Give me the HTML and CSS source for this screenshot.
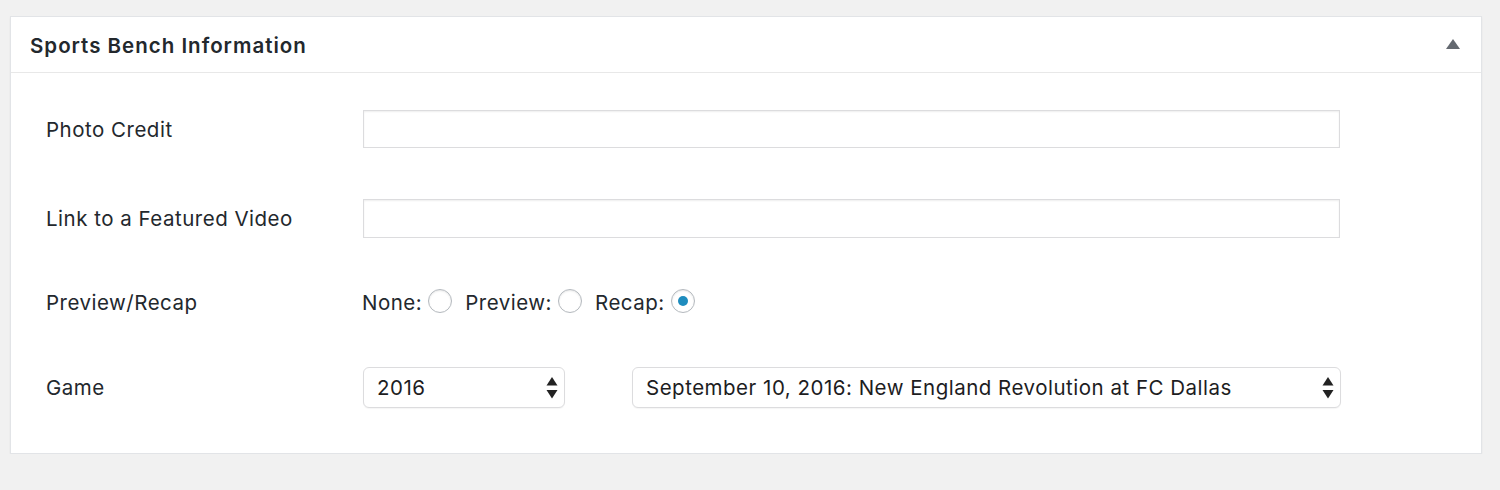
FILE: index.html
```html
<!DOCTYPE html>
<html lang="en">
<head>
<meta charset="utf-8">
<title>Sports Bench Information</title>
<link rel="stylesheet" href="styles.css">
</head>
<body>
<div class="postbox">
  <div class="postbox-header">
    <h2 class="postbox-title">Sports Bench Information</h2>
    <svg class="toggle-arrow" width="14" height="10" viewBox="0 0 14 10"><polygon points="7,0 14,10 0,10" fill="#646970"/></svg>
  </div>
  <div class="inside">
    <div class="field-row row-text">
      <label class="field-label">Photo Credit</label>
      <input class="text-input" type="text">
    </div>
    <div class="field-row row-text">
      <label class="field-label">Link to a Featured Video</label>
      <input class="text-input" type="text">
    </div>
    <div class="field-row row-radio">
      <label class="field-label">Preview/Recap</label>
      <div class="radio-group">
        <span class="radio-label">None:</span><input class="radio" type="radio" name="pr">
        <span class="radio-label">Preview:</span><input class="radio" type="radio" name="pr">
        <span class="radio-label">Recap:</span><input class="radio" type="radio" name="pr" checked>
      </div>
    </div>
    <div class="field-row row-select">
      <label class="field-label">Game</label>
      <div class="select-wrap select-year">
        <select class="select"><option>2016</option></select>
        <svg class="select-arrows" width="12" height="22" viewBox="0 0 12 22"><polygon points="6,0 11.5,8.5 0.5,8.5" fill="#222"/><polygon points="0.5,13 11.5,13 6,21.5" fill="#222"/></svg>
      </div>
      <div class="select-wrap select-game">
        <select class="select"><option>September 10, 2016: New England Revolution at FC Dallas</option></select>
        <svg class="select-arrows" width="12" height="22" viewBox="0 0 12 22"><polygon points="6,0 11.5,8.5 0.5,8.5" fill="#222"/><polygon points="0.5,13 11.5,13 6,21.5" fill="#222"/></svg>
      </div>
    </div>
  </div>
</div>
</body>
</html>
```

FILE: styles.css
```css
html, body {
  margin: 0;
  padding: 0;
  background: #f1f1f1;
}
body {
  padding: 16px 18px 0 10px;
  font-family: "Inter", "Noto Sans", "Liberation Sans", sans-serif;
  color: #23282d;
}
.postbox {
  width: 1470px;
  background: #fff;
  border: 1px solid #e2e4e7;
  box-shadow: 0 1px 2px rgba(0,0,0,0.05);
}
.postbox-header {
  height: 55px;
  display: flex;
  align-items: center;
  justify-content: space-between;
  padding: 0 21px 0 19px;
  border-bottom: 1px solid #e8e8e8;
}
.postbox-title {
  margin: 2px 0 0;
  font-size: 20.5px;
  font-weight: 600;
  color: #23282d;
  letter-spacing: 1px;
}
.toggle-arrow {
  margin-top: -2px;
}
.inside {
  padding: 37px 0 45px 35px;
  display: flex;
  flex-direction: column;
}
.field-row {
  display: flex;
  align-items: center;
}
.field-label {
  width: 317px;
  flex: none;
  font-size: 20.5px;
  letter-spacing: 0.5px;
  color: #23282d;
}
.row-text { height: 38px; }
.row-text + .row-text { margin-top: 51px; height: 39px; }
.row-radio { height: 38px; margin-top: 45px; }
.row-select { height: 41px; margin-top: 46px; }
.text-input {
  appearance: none;
  width: 977px;
  height: 38px;
  box-sizing: border-box;
  border: 1.5px solid #dcdcde;
  border-radius: 0;
  background: #fff;
  box-shadow: inset 0 1px 2px rgba(0,0,0,0.07);
  margin: 0;
  padding: 0 8px;
  font-size: 19px;
}
.row-text + .row-text .text-input { height: 39px; }
.radio-group {
  display: flex;
  align-items: center;
  margin-left: -1px;
}
.radio-label {
  font-size: 20.5px;
  letter-spacing: 0.5px;
  color: #23282d;
}
.radio {
  appearance: none;
  width: 24px;
  height: 24px;
  margin: 0 13px 0 6px;
  border: 1.5px solid #b4b9be;
  border-radius: 50%;
  background: #fff;
  box-shadow: inset 0 1px 2px rgba(0,0,0,0.1);
  box-sizing: border-box;
  position: relative;
  top: -1px;
}
.radio:checked::before {
  content: "";
  position: absolute;
  left: 50%;
  top: 50%;
  width: 10px;
  height: 10px;
  margin: -5px 0 0 -5px;
  border-radius: 50%;
  background: #1e8cbe;
}
.select-wrap {
  position: relative;
  height: 41px;
}
.select-year { width: 202px; }
.select-game { width: 709px; margin-left: 67px; }
.select {
  appearance: none;
  width: 100%;
  height: 41px;
  box-sizing: border-box;
  border: 1.5px solid #dcdcde;
  border-radius: 6px;
  background: #fff;
  box-shadow: 0 1px 1px rgba(0,0,0,0.04);
  padding: 0 13px;
  margin: 0;
  font-family: inherit;
  font-size: 20.5px;
  letter-spacing: 0.5px;
  color: #1d1d1f;
}
.select-arrows {
  position: absolute;
  right: 7px;
  top: 10px;
  pointer-events: none;
}
```
